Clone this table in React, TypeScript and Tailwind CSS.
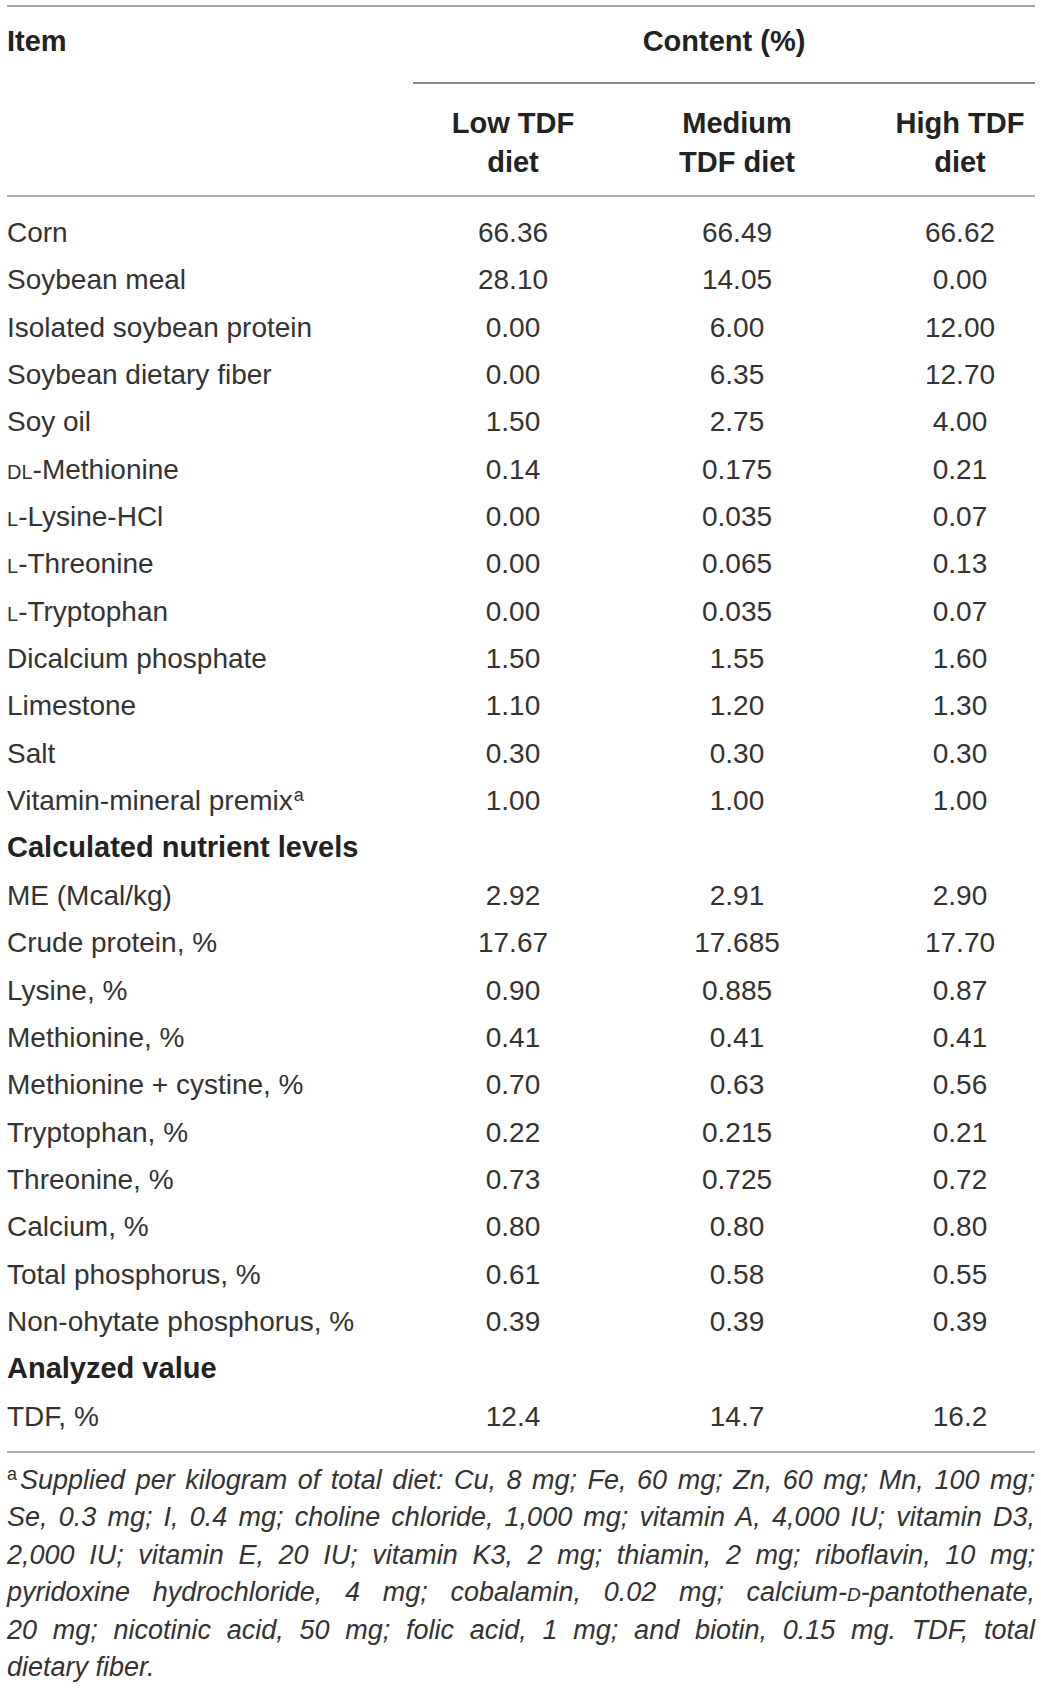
import React from "react";

// Diet composition table: ingredients, calculated nutrients and analyzed TDF,
// followed by a justified italic footnote.

type Row = { label: React.ReactNode; values?: [string, string, string]; heading?: boolean };

const sc = (s: string) => <span className="[font-variant:small-caps]">{s}</span>;

const rows: Row[] = [
  { label: "Corn", values: ["66.36", "66.49", "66.62"] },
  { label: "Soybean meal", values: ["28.10", "14.05", "0.00"] },
  { label: "Isolated soybean protein", values: ["0.00", "6.00", "12.00"] },
  { label: "Soybean dietary fiber", values: ["0.00", "6.35", "12.70"] },
  { label: "Soy oil", values: ["1.50", "2.75", "4.00"] },
  { label: <>{sc("dl")}-Methionine</>, values: ["0.14", "0.175", "0.21"] },
  { label: <>{sc("l")}-Lysine-HCl</>, values: ["0.00", "0.035", "0.07"] },
  { label: <>{sc("l")}-Threonine</>, values: ["0.00", "0.065", "0.13"] },
  { label: <>{sc("l")}-Tryptophan</>, values: ["0.00", "0.035", "0.07"] },
  { label: "Dicalcium phosphate", values: ["1.50", "1.55", "1.60"] },
  { label: "Limestone", values: ["1.10", "1.20", "1.30"] },
  { label: "Salt", values: ["0.30", "0.30", "0.30"] },
  {
    label: (
      <>
        Vitamin-mineral premix<sup className="text-[18px] relative -top-[9px] ml-[1px]">a</sup>
      </>
    ),
    values: ["1.00", "1.00", "1.00"],
  },
  { label: "Calculated nutrient levels", heading: true },
  { label: "ME (Mcal/kg)", values: ["2.92", "2.91", "2.90"] },
  { label: "Crude protein, %", values: ["17.67", "17.685", "17.70"] },
  { label: "Lysine, %", values: ["0.90", "0.885", "0.87"] },
  { label: "Methionine, %", values: ["0.41", "0.41", "0.41"] },
  { label: "Methionine + cystine, %", values: ["0.70", "0.63", "0.56"] },
  { label: "Tryptophan, %", values: ["0.22", "0.215", "0.21"] },
  { label: "Threonine, %", values: ["0.73", "0.725", "0.72"] },
  { label: "Calcium, %", values: ["0.80", "0.80", "0.80"] },
  { label: "Total phosphorus, %", values: ["0.61", "0.58", "0.55"] },
  { label: "Non-ohytate phosphorus, %", values: ["0.39", "0.39", "0.39"] },
  { label: "Analyzed value", heading: true },
  { label: "TDF, %", values: ["12.4", "14.7", "16.2"] },
];

const footLines: React.ReactNode[] = [
  "Supplied per kilogram of total diet: Cu, 8 mg; Fe, 60 mg; Zn, 60 mg; Mn, 100 mg;",
  "Se, 0.3 mg; I, 0.4 mg; choline chloride, 1,000 mg; vitamin A, 4,000 IU; vitamin D3,",
  "2,000 IU; vitamin E, 20 IU; vitamin K3, 2 mg; thiamin, 2 mg; riboflavin, 10 mg;",
  <>pyridoxine hydrochloride, 4 mg; cobalamin, 0.02 mg; calcium-{sc("d")}-pantothenate,</>,
  "20 mg; nicotinic acid, 50 mg; folic acid, 1 mg; and biotin, 0.15 mg. TDF, total",
];

const cols = "grid grid-cols-[394px_224px_224px_1fr]";

export default function App() {
  return (
    <div className="min-h-[1689px] bg-white font-['Liberation_Sans',Arial,sans-serif] text-[#333333]">
      <div className="pl-[7px] pr-[6px] pt-[5px]">
        {/* header */}
        <div className="border-t-2 border-[#a9a9a9]">
          <div className={cols}>
            <div className="pt-[10px] text-[29px] leading-[48px] font-bold text-[#222]">Item</div>
            <div className="col-span-3 ml-[12px] border-b-2 border-[#8c8c8c] pt-[10px] pb-[17px] text-center text-[29px] leading-[48px] font-bold text-[#222]">
              Content (%)
            </div>
          </div>
          <div className={`${cols} border-b-2 border-[#b0b0b0] pt-[20px] pb-[13px] text-[29px] leading-[39px] font-bold text-[#222]`}>
            <div />
            <div className="text-center">
              Low TDF
              <br />
              diet
            </div>
            <div className="text-center">
              Medium
              <br />
              TDF diet
            </div>
            <div className="pl-[36px] text-center">
              High TDF
              <br />
              diet
            </div>
          </div>
        </div>

        {/* body */}
        <div className="border-b-2 border-[#b0b0b0] pt-[12px] pb-[11px] text-[28px] leading-[47.35px]">
          {rows.map((r, i) =>
            r.heading ? (
              <div key={i} className="text-[29px] font-bold text-[#222]">
                {r.label}
              </div>
            ) : (
              <div key={i} className={cols}>
                <div className="whitespace-nowrap">{r.label}</div>
                <div className="text-center">{r.values![0]}</div>
                <div className="text-center">{r.values![1]}</div>
                <div className="pl-[36px] text-center">{r.values![2]}</div>
              </div>
            )
          )}
        </div>

        {/* footnote */}
        <div className="pt-[9px] text-[27px] leading-[37.5px] italic">
          {footLines.map((l, i) => (
            <div key={i} className="text-justify [text-align-last:justify] whitespace-nowrap">
              {i === 0 && <sup className="not-italic text-[18px] relative -top-[9px] mr-[3px]">a</sup>}
              {l}
            </div>
          ))}
          <div>dietary fiber.</div>
        </div>
      </div>
    </div>
  );
}
